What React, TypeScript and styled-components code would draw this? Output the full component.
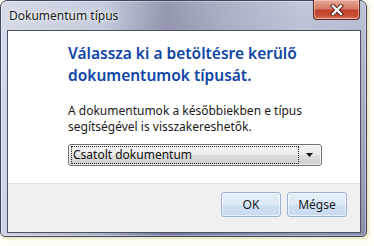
import React from "react";
import styled, { createGlobalStyle } from "styled-components";

const Global = createGlobalStyle`
  html, body { margin: 0; padding: 0; }
  body {
    background: #fefef6;
    width: 374px;
    height: 246px;
    overflow: hidden;
    font-family: "Noto Sans", "Open Sans", sans-serif;
  }
`;

const Stage = styled.div`
  width: 374px;
  height: 246px;
`;

const Window = styled.div`
  box-sizing: border-box;
  width: 367px;
  height: 237px;
  border: 1px solid #45485c;
  border-radius: 7px 7px 5px 5px;
  background:
    linear-gradient(90deg, rgba(215,221,233,0.9) 0%, rgba(200,207,222,0.6) 28%, rgba(110,114,142,0.55) 45%, rgba(140,146,170,0.4) 62%, rgba(190,196,214,0.3) 82%, rgba(170,176,198,0.3) 100%),
    linear-gradient(180deg, #c4cadb 0%, #a9afc5 40%, #8f95b0 80%, #7a7f9d 100%);
  box-shadow: 2px 2px 3px rgba(214, 206, 140, 0.55), inset 0 0 0 1px rgba(255,255,255,0.35);
  display: flex;
  flex-direction: column;
`;

const TitleBar = styled.div`
  height: 29px;
  display: flex;
  align-items: flex-start;
  justify-content: space-between;
  padding: 0 6px 0 8px;
`;

const Title = styled.div`
  font-size: 12px;
  color: #1a1a1a;
  margin-top: 6px;
  text-shadow: 0 0 6px rgba(255,255,255,0.9), 0 0 3px rgba(255,255,255,0.8);
`;

const CloseButton = styled.div`
  box-sizing: border-box;
  width: 47px;
  height: 20px;
  margin-top: -1px;
  border: 1px solid #5d2a25;
  border-top: none;
  border-radius: 0 0 4px 4px;
  background: linear-gradient(180deg, #e8a898 0%, #d77c68 45%, #c0412a 55%, #c9513a 85%, #de8a74 100%);
  box-shadow: inset 0 0 0 1px rgba(255,220,210,0.5);
  display: flex;
  align-items: center;
  justify-content: center;
`;

const Client = styled.div`
  flex: 1;
  margin: 0 5px 3px 6px;
  border: 1px solid #4c5066;
  display: flex;
  flex-direction: column;
  background: #ffffff;
`;

const Body = styled.div`
  flex: 1;
  background: #ffffff;
  padding: 11px 0 0 60px;
  display: flex;
  flex-direction: column;
`;

const Heading = styled.div`
  font-size: 15.5px;
  font-weight: 600;
  color: #0f46a6;
  line-height: 22px;
`;

const Text = styled.div`
  font-size: 12px;
  color: #1a1a1a;
  line-height: 16px;
  margin-top: 17px;
`;

const Combo = styled.div`
  box-sizing: border-box;
  width: 254px;
  height: 22px;
  margin-top: 9px;
  border: 1px solid #707070;
  border-radius: 3px;
  background: linear-gradient(180deg, #f3f3f3 0%, #ebebeb 48%, #dddddd 52%, #cfcfcf 100%);
  box-shadow: inset 0 0 0 1px rgba(255,255,255,0.7);
  display: flex;
  align-items: center;
  padding: 2px;
`;

const ComboValue = styled.div`
  flex: 1;
  height: 16px;
  border: 1px dotted #222;
  font-size: 12px;
  line-height: 15px;
  color: #111;
  padding-left: 1px;
`;

const ComboArrow = styled.div`
  width: 20px;
  display: flex;
  justify-content: center;
  align-items: center;
`;

const Footer = styled.div`
  height: 49px;
  box-sizing: border-box;
  background: #f0f0f0;
  border-top: 1px solid #dfdfdf;
  display: flex;
  justify-content: flex-end;
  align-items: flex-start;
  gap: 6px;
  padding: 8px 13px 0 0;
`;

const Button = styled.div`
  box-sizing: border-box;
  width: 60px;
  height: 25px;
  border: 1px solid #9bb3d3;
  border-radius: 3px;
  background: linear-gradient(180deg, #e7f0fa 0%, #dbe8f6 50%, #cfe0f3 51%, #c6daf1 100%);
  box-shadow: inset 0 0 0 1px rgba(255,255,255,0.6);
  font-size: 12px;
  color: #1a1a1a;
  display: flex;
  align-items: center;
  justify-content: center;
`;

export default function App() {
  return (
    <Stage>
      <Global />
      <Window>
        <TitleBar>
          <Title>Dokumentum típus</Title>
          <CloseButton>
            <svg width="14" height="12" viewBox="0 0 14 12">
              <path d="M3 2 L11 10 M11 2 L3 10" stroke="#4a1a14" strokeWidth="4.2" strokeLinecap="square" />
              <path d="M3 2 L11 10 M11 2 L3 10" stroke="#ffffff" strokeWidth="2.4" strokeLinecap="square" />
            </svg>
          </CloseButton>
        </TitleBar>
        <Client>
          <Body>
            <Heading>
              Válassza ki a betöltésre kerülő
              <br />
              dokumentumok típusát.
            </Heading>
            <Text>
              A dokumentumok a későbbiekben e típus
              <br />
              segítségével is visszakereshetők.
            </Text>
            <Combo>
              <ComboValue>Csatolt dokumentum</ComboValue>
              <ComboArrow>
                <svg width="7" height="4" viewBox="0 0 7 4">
                  <path d="M0 0 H7 L3.5 4 Z" fill="#111" />
                </svg>
              </ComboArrow>
            </Combo>
          </Body>
          <Footer>
            <Button>OK</Button>
            <Button>Mégse</Button>
          </Footer>
        </Client>
      </Window>
    </Stage>
  );
}
